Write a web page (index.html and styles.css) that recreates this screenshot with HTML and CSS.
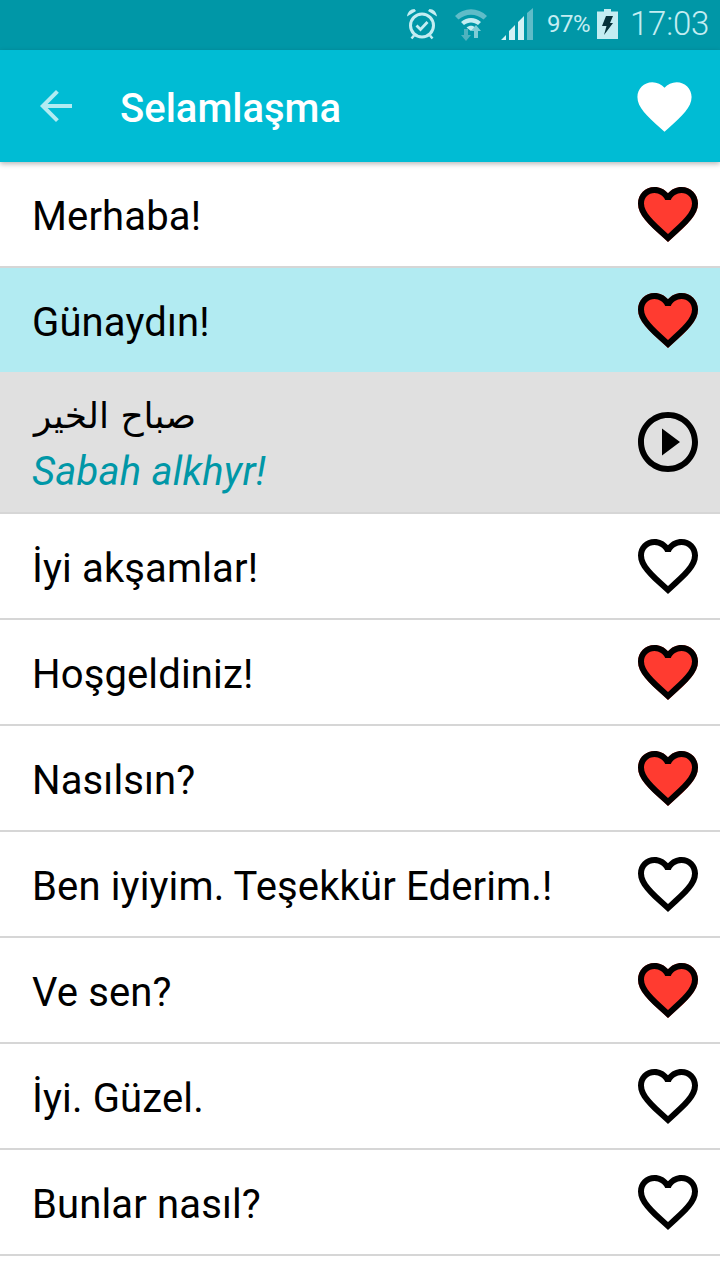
FILE: index.html
```html
<!DOCTYPE html>
<html lang="tr">
<head>
<meta charset="utf-8">
<title>Selamlaşma</title>
<link rel="stylesheet" href="styles.css">
</head>
<body>
<svg class="defs" width="0" height="0" aria-hidden="true">
  <defs>
    <path id="heart-shape" d="M12 21.35l-1.45-1.32C5.4 15.36 2 12.28 2 8.5 2 5.42 4.42 3 7.5 3c1.74 0 3.41.81 4.5 2.09C13.09 3.81 14.76 3 16.5 3 19.58 3 22 5.42 22 8.5c0 3.78-3.4 6.86-8.55 11.54L12 21.35z"/>
    <path id="heart-line" d="M16.5 3c-1.74 0-3.41.81-4.5 2.09C10.91 3.81 9.24 3 7.5 3 4.42 3 2 5.42 2 8.5c0 3.78 3.4 6.86 8.55 11.54L12 21.35l1.45-1.32C18.6 15.36 22 12.28 22 8.5 22 5.42 19.58 3 16.5 3zm-4.4 15.55l-.1.1-.1-.1C7.14 14.24 4 11.39 4 8.5 4 6.5 5.5 5 7.5 5c1.54 0 3.04.99 3.57 2.36h1.87C13.46 5.99 14.96 5 16.5 5c2 0 3.5 1.5 3.5 3.5 0 2.89-3.14 5.74-7.9 10.05z"/>
    <g id="heart-on"><use href="#heart-shape" class="heart-red"/><use href="#heart-line"/></g>
  </defs>
</svg>

<header class="status">
  <svg class="st-alarm" viewBox="0 0 32 32"><circle cx="16" cy="17.500" r="11.500" fill="none" stroke="#c4edf2" stroke-width="3"/><path d="M10.500 17.500l4 4 7-7.500" fill="none" stroke="#c4edf2" stroke-width="2.800"/><path d="M1 8.500C1.500 4 4.500 1 8.500 1l1.500 2zM31 8.500C30.500 4 27.500 1 23.500 1l-1.500 2z" fill="#c4edf2"/><path d="M8 27.500l-2.500 3M24 27.500l2.500 3" fill="none" stroke="#c4edf2" stroke-width="2.500"/></svg>
  <svg class="st-wifi" viewBox="0 0 34 34"><path d="M1 9C10 0 24 0 33 9l-3.500 3.500C22 6 12 6 4.500 12.500z" fill="#5fbcc8"/><path d="M7 15c6-5.500 14-5.500 20 0l-3 3c-4-3.500-10-3.500-14 0z" fill="#c4edf2"/><path d="M12.500 20.500c3-2.500 6-2.500 9 0L17 24z" fill="#c4edf2"/><path d="M10 22h4v6h3l-5 6-5-6h3z" fill="#4fb2bf"/><path d="M22 18l5 6h-3v7h-4v-7h-3z" fill="#7fcdd6"/></svg>
  <svg class="st-signal" viewBox="0 0 34 32"><path d="M0 32l5-5v5zM8 32V23l6-6v15zM17 32V14l6-6v24z" fill="#d5f1f5"/><path d="M26 32V5l6-5v32z" fill="#5fbcc8"/></svg>
  <span class="st-pct">97%</span>
  <svg class="st-batt" viewBox="0 0 21 30"><path d="M7 0h7v2.500h7V30H0V2.500h7z" fill="#c4edf2"/><path d="M9 7h7l-3 7h3L7 26l2.500-9H5z" fill="#06323a"/></svg>
  <span class="st-time">17:03</span>
</header>

<nav class="toolbar">
  <svg class="back" viewBox="0 0 24 24"><path d="M20 11H7.830l5.590-5.590L12 4l-8 8 8 8 1.410-1.410L7.830 13H20v-2z"/></svg>
  <h1 class="title">Selamlaşma</h1>
  <svg class="fav" viewBox="0 0 24 24"><use href="#heart-shape"/></svg>
</nav>

<ul class="list">
  <li class="row"><span class="label">Merhaba!</span><svg class="icon" viewBox="0 0 24 24"><use href="#heart-on"/></svg></li>
  <li class="row row-sel"><span class="label">Günaydın!</span><svg class="icon" viewBox="0 0 24 24"><use href="#heart-on"/></svg></li>
  <li class="row row-open">
    <div class="stack">
      <span class="arabic" dir="rtl">صباح الخير</span>
      <span class="translit">Sabah alkhyr!</span>
    </div>
    <svg class="icon" viewBox="0 0 24 24"><path d="M10 16.500l6-4.500-6-4.500v9zM12 2C6.480 2 2 6.480 2 12s4.480 10 10 10 10-4.480 10-10S17.520 2 12 2zm0 18c-4.410 0-8-3.590-8-8s3.590-8 8-8 8 3.590 8 8-3.590 8-8 8z"/></svg>
  </li>
  <li class="row"><span class="label">İyi akşamlar!</span><svg class="icon" viewBox="0 0 24 24"><use href="#heart-line"/></svg></li>
  <li class="row"><span class="label">Hoşgeldiniz!</span><svg class="icon" viewBox="0 0 24 24"><use href="#heart-on"/></svg></li>
  <li class="row"><span class="label">Nasılsın?</span><svg class="icon" viewBox="0 0 24 24"><use href="#heart-on"/></svg></li>
  <li class="row"><span class="label">Ben iyiyim. Teşekkür Ederim.!</span><svg class="icon" viewBox="0 0 24 24"><use href="#heart-line"/></svg></li>
  <li class="row"><span class="label">Ve sen?</span><svg class="icon" viewBox="0 0 24 24"><use href="#heart-on"/></svg></li>
  <li class="row"><span class="label">İyi. Güzel.</span><svg class="icon" viewBox="0 0 24 24"><use href="#heart-line"/></svg></li>
  <li class="row"><span class="label">Bunlar nasıl?</span><svg class="icon" viewBox="0 0 24 24"><use href="#heart-line"/></svg></li>
</ul>
</body>
</html>
```

FILE: styles.css
```css
* { box-sizing: border-box; }
html, body { margin: 0; padding: 0; }
body {
  width: 720px;
  height: 1280px;
  overflow: hidden;
  background: #fff;
  font-family: Roboto, "Noto Sans", sans-serif;
  color: #000;
}
.defs { display: block; height: 0; }
.heart-red { fill: #ff3b30; }

.status {
  height: 50px;
  background: #0097a7;
  display: flex;
  align-items: center;
  color: #c4edf2;
  padding: 0 0 3px 406px;
}
.st-alarm { width: 32px; height: 32px; flex: none; }
.st-wifi { width: 34px; height: 34px; flex: none; margin-left: 16px; }
.st-signal { width: 34px; height: 32px; flex: none; margin-left: 13px; }
.st-pct { font-size: 24px; margin-left: 12px; width: 45px; letter-spacing: -0.5px; }
.st-batt { width: 21px; height: 30px; flex: none; margin-left: 5px; }
.st-time { font-size: 33px; font-weight: 300; margin-left: 12px; letter-spacing: -0.2px; }

.toolbar {
  position: relative;
  z-index: 1;
  height: 112px;
  background: #00bcd4;
  box-shadow: 0 2px 5px rgba(0, 0, 0, 0.28);
  display: flex;
  align-items: center;
  padding-left: 32px;
  padding-right: 23px;
}
.back { width: 48px; height: 48px; fill: #b2ebf2; flex: none; }
.title {
  margin: 0 0 0 40px;
  padding-top: 6px;
  flex: 1;
  font-size: 40px;
  line-height: 48px;
  font-weight: 500;
  color: #fff;
}
.fav { width: 65px; height: 65px; fill: #fff; flex: none; }

.list { list-style: none; margin: 0; padding: 0; }
.row {
  height: 106px;
  display: flex;
  align-items: center;
  justify-content: space-between;
  padding: 0 16px 0 32px;
  border-bottom: 2px solid #d6d6d6;
}
.row-sel { height: 104px; background: #b2ebf2; border-bottom: 0; }
.row-open { height: 142px; background: #e0e0e0; }
.label { font-size: 40px; padding-top: 4px; letter-spacing: 0.14px; }
.icon { width: 72px; height: 72px; flex: none; }
.stack { display: flex; flex-direction: column; align-items: flex-start; padding-top: 1px; }
.arabic { font-family: "DejaVu Sans", sans-serif; font-size: 36px; line-height: 58px; margin-left: 2px; }
.translit { font-size: 40px; line-height: 54px; font-style: italic; letter-spacing: 0.2px; color: #0097a7; }
```
